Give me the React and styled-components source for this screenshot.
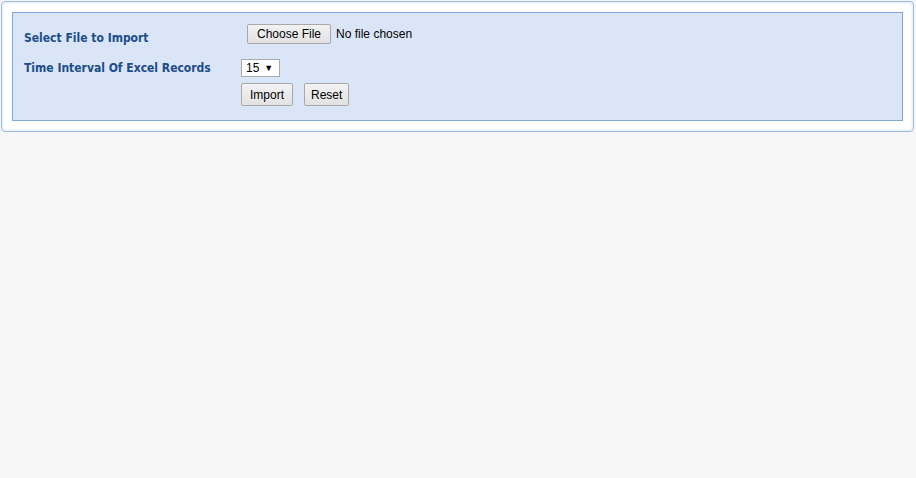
import React from 'react';
import styled, { createGlobalStyle } from 'styled-components';

const GlobalStyle = createGlobalStyle`
  html, body {
    margin: 0;
    padding: 0;
    background: #f6f6f6;
    height: 100%;
  }
`;

const Panel = styled.div`
  margin: 1px 2px 0 1px;
  padding: 10px;
  background: #fff;
  border: 1px solid #9bbbe3;
  border-radius: 4px;
  box-shadow: inset 0 0 3px 1px #e4ecf8;
`;

const Form = styled.div`
  background: #dae5f8;
  border: 1px solid #80a8da;
  padding: 10px 11px 14px 11px;
  display: grid;
  grid-template-columns: 217px 1fr;
  align-items: center;
`;

const Label = styled.div`
  font-family: "DejaVu Sans Condensed", "DejaVu Sans", Verdana, sans-serif;
  font-weight: bold;
  font-size: 12px;
  color: #1b4d89;
  padding-top: ${p => p.$top || 0}px;
`;

const Cell = styled.div`
  display: flex;
  align-items: center;
  gap: ${p => p.$gap || 0}px;
  padding-left: ${p => p.$indent || 0}px;
  padding-top: ${p => p.$top || 0}px;
  font-family: "Liberation Sans", Arial, sans-serif;
  font-size: 12px;
  color: #000;
`;

const Btn = styled.button`
  font-family: "Liberation Sans", Arial, sans-serif;
  font-size: 12px;
  color: #000;
  height: ${p => p.$h || 20}px;
  padding: 0 ${p => p.$px || 8}px;
  background: linear-gradient(#f2f2f2, #e2e2e2);
  border: 1px solid #a8a8a8;
  border-radius: 2px;
  line-height: 1;
`;

const Select = styled.div`
  display: flex;
  align-items: center;
  gap: 5px;
  height: 18px;
  padding: 0 6px 0 4px;
  background: #fff;
  border: 1px solid #a9a9a9;
  font-family: "Liberation Sans", Arial, sans-serif;
  font-size: 12px;
  box-sizing: border-box;
`;

const Caret = styled.span`
  font-size: 9px;
`;

export default function App() {
  return (
    <>
      <GlobalStyle />
      <Panel>
        <Form>
          <Label $top={8}>Select File to Import</Label>
          <Cell $indent={6} $gap={5}>
            <Btn $px={9}>Choose File</Btn>
            <span>No file chosen</span>
          </Cell>
          <Label $top={13}>Time Interval Of Excel Records</Label>
          <Cell $top={14}>
            <Select>
              15 <Caret>▼</Caret>
            </Select>
          </Cell>
          <div />
          <Cell $top={6} $gap={11}>
            <Btn $h={23} $px={8}>Import</Btn>
            <Btn $h={23} $px={6}>Reset</Btn>
          </Cell>
        </Form>
      </Panel>
    </>
  );
}
